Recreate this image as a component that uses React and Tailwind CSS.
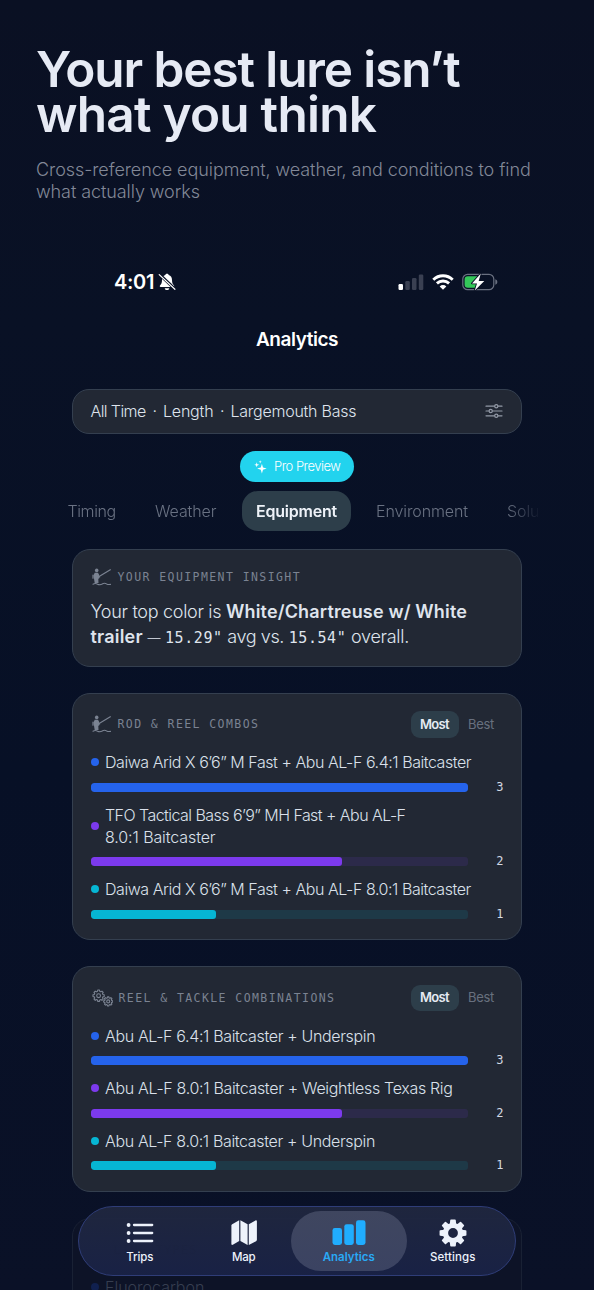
import clsx from 'clsx';

const rodCombos = [
  { label: ['Daiwa Arid X 6’6” M Fast + Abu AL-F 6.4:1 Baitcaster'], value: 3, tracking: 'tracking-[-0.45px]', color: 'blue' },
  { label: ['TFO Tactical Bass 6’9” MH Fast + Abu AL-F', '8.0:1 Baitcaster'], value: 2, tracking: 'tracking-[-0.55px]', color: 'violet' },
  { label: ['Daiwa Arid X 6’6” M Fast + Abu AL-F 8.0:1 Baitcaster'], value: 1, tracking: 'tracking-[-0.45px]', color: 'cyan' },
];

const reelCombos = [
  { label: ['Abu AL-F 6.4:1 Baitcaster + Underspin'], value: 3, tracking: 'tracking-[-0.35px]', color: 'blue' },
  { label: ['Abu AL-F 8.0:1 Baitcaster + Weightless Texas Rig'], value: 2, tracking: 'tracking-[-0.32px]', color: 'violet' },
  { label: ['Abu AL-F 8.0:1 Baitcaster + Underspin'], value: 1, tracking: 'tracking-[-0.35px]', color: 'cyan' },
];

const barColors = {
  blue: { fill: 'bg-[#2563eb]', track: 'bg-[#2563eb]/10' },
  violet: { fill: 'bg-[#7c3aed]', track: 'bg-[#7c3aed]/12' },
  cyan: { fill: 'bg-[#06b6d4]', track: 'bg-[#06b6d4]/12' },
};

function gearPath(cx, cy, outer, inner, teeth) {
  const points = [];
  const step = (Math.PI * 2) / teeth;
  for (let i = 0; i < teeth; i++) {
    const a = i * step - Math.PI / 2;
    [[-0.32, inner], [-0.2, outer], [0.2, outer], [0.32, inner]].forEach(([k, r]) => {
      points.push(`${(cx + r * Math.cos(a + k * step)).toFixed(2)} ${(cy + r * Math.sin(a + k * step)).toFixed(2)}`);
    });
  }
  return `M${points.join('L')}Z`;
}

function AnglerIcon() {
  return (
    <svg viewBox="0 0 20 18" className="h-[18px] w-[21px]" fill="none" stroke="currentColor" strokeLinecap="round" strokeLinejoin="round">
      <circle cx="5.2" cy="2.4" r="1.8" fill="currentColor" stroke="none" />
      <path d="M3.200 4.700h3.300l1.200 2.400v3.300l-.9.4.2 4.200H3.200l-.6-3.700-.6-3.700z" fill="currentColor" stroke="none" />
      <path d="M1.500 7.200v3M3.300 9h4.800" strokeWidth="1.200" />
      <path d="M7.600 8.400L18.800 1.700" strokeWidth="1.200" />
      <path d="M1.500 16.200c1.600-.9 3-.9 4.600 0 1.500.7 3.100.7 4.600-.2 1.500-1 3-1 4.400-.1 1.200.7 2.300.8 3.900.5" strokeWidth="1.100" />
    </svg>
  );
}

function GearsIcon() {
  return (
    <svg viewBox="0 0 22 18" className="h-[18px] w-[22px]" fill="none" stroke="currentColor" strokeWidth="1.1" strokeLinejoin="round">
      <path d={gearPath(7.6, 6.7, 5.7, 4.5, 8)} />
      <circle cx="7.6" cy="6.7" r="1.9" />
      <path d={gearPath(17.2, 12.4, 4.6, 3.6, 8)} />
      <circle cx="17.2" cy="12.4" r="1.5" />
    </svg>
  );
}

function SlidersIcon() {
  return (
    <svg viewBox="0 0 18 14" className="h-[14px] w-[18px] text-[#9299a6]" fill="none" stroke="currentColor" strokeWidth="1.2" strokeLinecap="round">
      <path d="M1 2.2h8.400M13.200 2.200H17M1 7h2.800M7.600 7H17M1 11.800h8.400M13.200 11.800H17" />
      <circle cx="11.3" cy="2.200" r="1.600" />
      <circle cx="5.700" cy="7" r="1.600" />
      <circle cx="11.3" cy="11.800" r="1.600" />
    </svg>
  );
}

function StatusBar() {
  return (
    <div className="mt-[66px] flex h-6 items-center justify-between pr-[96px] pl-[114px] text-white">
      <div className="flex items-center gap-[4px]">
        <span className="text-[20px] font-semibold tracking-[-0.3px]">4:01</span>
        <svg viewBox="0 0 18 18" className="h-[18px] w-[18px]">
          <path d="M9 .8c.9 0 1.500.5 1.700 1.300 2.200.7 3.300 2.500 3.300 5 0 3.300.8 4.300 2 5.500.5.6.2 1.500-.6 1.500H2.600c-.8 0-1.100-.9-.6-1.500 1.200-1.200 2-2.200 2-5.500 0-2.500 1.100-4.300 3.300-5C7.500 1.300 8.100.8 9 .8zM6.700 15.200h4.600c-.2 1.200-1.100 1.900-2.300 1.900s-2.100-.7-2.300-1.900z" fill="currentColor" />
          <path d="M1.200 1.200L17.300 16.300" stroke="#0a1125" strokeWidth="3" />
          <path d="M1.200 1.600L16.900 16.300" stroke="currentColor" strokeWidth="1.200" strokeLinecap="round" />
        </svg>
      </div>
      <div className="flex items-center gap-[8px]">
        <svg viewBox="0 0 26 16" className="h-4 w-[26px]">
          <rect x="0.5" y="10" width="4.500" height="6" rx="1.200" fill="#fff" />
          <rect x="7.300" y="7" width="4.500" height="9" rx="1.200" fill="#3a4052" />
          <rect x="14" y="4" width="4.500" height="12" rx="1.200" fill="#3a4052" />
          <rect x="20.800" y="0.500" width="4.500" height="15.500" rx="1.200" fill="#3a4052" />
        </svg>
        <svg viewBox="0 0 22 16" className="h-4 w-[22px]" fill="none" stroke="currentColor" strokeWidth="2.900">
          <path d="M1.300 5.700a14 14 0 0 1 19.400 0" />
          <path d="M4.900 9.400a8.900 8.900 0 0 1 12.200 0" />
          <path d="M11 15.800L7.700 12.400a4.700 4.700 0 0 1 6.600 0z" fill="currentColor" stroke="none" />
        </svg>
        <svg viewBox="0 0 36 18" className="h-[18px] w-9">
          <rect x="0.800" y="1.300" width="31" height="15.400" rx="4.800" fill="none" stroke="#6a7080" strokeWidth="1.200" />
          <path d="M33.300 6.300c1.300.4 2 1.400 2 2.700s-.7 2.300-2 2.700z" fill="#6a7080" />
          <path d="M5.800 3.200H15v11.600H5.800a3.200 3.200 0 0 1-3.200-3.200V6.400a3.200 3.200 0 0 1 3.200-3.200z" fill="#34c759" />
          <path d="M18.800.6L10 10.400h5l-2.200 7.100L22.300 7.900h-5.600z" fill="#fff" stroke="#0a1125" strokeWidth="1.800" paintOrder="stroke" strokeLinejoin="round" />
        </svg>
      </div>
    </div>
  );
}

function Card({ className, children }) {
  return (
    <section className={clsx('mx-[72px] rounded-[18px] border border-[#343f4f] bg-[#222834] px-[17.5px]', className)}>
      {children}
    </section>
  );
}

function CardTitle({ icon, children }) {
  return (
    <div className="flex items-center gap-[6px] text-[#7b8392]">
      {icon}
      <h2 className="font-['DejaVu_Sans_Mono',monospace] text-[11.5px] leading-4 tracking-[1.42px] whitespace-nowrap uppercase">{children}</h2>
    </div>
  );
}

function SortToggle() {
  return (
    <div className="flex items-center text-[13px]">
      <span className="flex h-[26.5px] w-12 items-center justify-center rounded-[9px] bg-[#2d3e4a] font-semibold tracking-[-0.6px] text-[#e6ebf3]">Most</span>
      <span className="w-[45px] pl-[9.5px] tracking-[-0.3px] text-[#68707f]">Best</span>
    </div>
  );
}

function BarRow({ label, value, tracking, color }) {
  const { fill, track } = barColors[color];
  return (
    <li>
      <div className="flex items-center gap-[6.5px]">
        <span className={clsx('size-2 shrink-0 rounded-full', fill)} />
        <p className={clsx('text-[16px] leading-[22px] font-light whitespace-nowrap text-[#dae0ea]', tracking)}>
          {label.map((line, i) => (
            <span key={line} className={clsx('block', i > 0 && 'tracking-[-0.1px]')}>{line}</span>
          ))}
        </p>
      </div>
      <div className="mt-[9.5px] flex h-[9px] items-center justify-between">
        <div className={clsx('h-[9px] w-[377px] overflow-hidden rounded-[3px]', track)}>
          <div className={clsx('h-full rounded-[3px]', fill)} style={{ width: `${(value / 3) * 100}%` }} />
        </div>
        <span className="font-['DejaVu_Sans_Mono',monospace] text-[12px] leading-[9px] text-[#d3d9e3]">{value}</span>
      </div>
    </li>
  );
}

function ComboCard({ icon, title, rows, className }) {
  return (
    <Card className={className}>
      <div className="flex h-[26.5px] items-center justify-between">
        <CardTitle icon={icon}>{title}</CardTitle>
        <SortToggle />
      </div>
      <ul className="mt-[13.5px] flex flex-col gap-3">
        {rows.map((row) => (
          <BarRow key={row.color} {...row} />
        ))}
      </ul>
    </Card>
  );
}

function NavItem({ icon, label, active, tracking, className }) {
  return (
    <div
      className={clsx(
        'flex h-[60.5px] w-[115.5px] flex-col items-center rounded-full pt-[8px]',
        active ? 'bg-gradient-to-b from-[#3f465f] to-[#3b4362] text-[#29a9f5]' : 'text-[#edf2fb]',
        className
      )}
    >
      <div className="flex h-[28px] items-center justify-center">{icon}</div>
      <span className={clsx('mt-[3px] text-[11.5px] leading-[14px]', active ? 'font-semibold' : 'font-medium', tracking)}>{label}</span>
    </div>
  );
}

function TabBar() {
  return (
    <nav className="absolute top-[1206px] left-[78px] flex h-[70px] w-[438px] items-center rounded-[35px] border border-[#2f3d78] bg-gradient-to-b from-[#20273f]/94 to-[#1a2348]/90 px-[3px]">
      <NavItem
        label="Trips"
        tracking="tracking-[-0.1px]"
        icon={
          <svg viewBox="0 0 28 22" className="h-[22px] w-7" fill="currentColor">
            <circle cx="2.600" cy="3" r="1.900" />
            <circle cx="2.600" cy="11" r="1.900" />
            <circle cx="2.600" cy="19" r="1.900" />
            <path d="M8 3h18.200M8 11h18.200M8 19h18.200" stroke="currentColor" strokeWidth="2.300" strokeLinecap="round" />
          </svg>
        }
      />
      <NavItem
        className="-ml-[11.500px]"
        label="Map"
        tracking="tracking-[-0.2px]"
        icon={
          <svg viewBox="0 0 28 27" className="h-[27px] w-7" fill="currentColor">
            <path d="M9.200 1.200v20.900l-6.400 3.700c-.7.4-1.400 0-1.400-.8V6.600c0-.6.3-1.100.8-1.400z" />
            <path d="M10.400 1.200l7.200 4v20.700l-7.200-3.800z" />
            <path d="M18.800 5.200l6.700-3.800c.7-.4 1.400 0 1.400.8v18.600c0 .6-.3 1.100-.8 1.400l-7.300 3.800z" />
          </svg>
        }
      />
      <NavItem
        active
        className="-ml-[10.500px]"
        label="Analytics"
        icon={
          <svg viewBox="0 0 34 25" className="h-[25px] w-[34px]" fill="#20adff">
            <rect x="0.500" y="8" width="9.500" height="17" rx="2.400" />
            <rect x="12.300" y="4.200" width="9.500" height="20.800" rx="2.400" />
            <rect x="24" y="0.300" width="9.500" height="24.700" rx="2.400" />
          </svg>
        }
      />
      <NavItem
        className="-ml-[11.500px]"
        label="Settings"
        tracking="tracking-[0.1px]"
        icon={
          <svg viewBox="0 0 28 28" className="size-7" fill="currentColor" stroke="currentColor" strokeWidth="1.600" strokeLinejoin="round">
            <path
              fillRule="evenodd"
              d={`${gearPath(14, 14, 12.8, 9.4, 8)}M14 8.300a5.700 5.700 0 1 0 0 11.400a5.700 5.700 0 1 0 0-11.400Z`}
            />
          </svg>
        }
      />
    </nav>
  );
}

export default function App() {
  return (
    <main className="relative h-[1290px] w-[594px] overflow-hidden bg-[linear-gradient(#0a1023,#091125_25%,#071026_60%,#0a1127)] font-[Inter,sans-serif]">
      <header className="pt-[46.5px] pl-[36px] whitespace-nowrap">
        <h1 className="text-[49.5px] leading-[45px] font-semibold text-[#e6eaf4]">
          <span className="block tracking-[-1.1px]">Your best lure isn’t</span>
          <span className="block tracking-[-0.75px]">what you think</span>
        </h1>
        <p className="mt-[22px] text-[18px] leading-[22.5px] font-light text-[#828897]">
          <span className="block tracking-[-0.07px]">Cross-reference equipment, weather, and conditions to find</span>
          <span className="block tracking-[-0.08px]">what actually works</span>
        </p>
      </header>

      <StatusBar />
      <h2 className="mt-[32px] text-center text-[19px] leading-7 font-semibold tracking-[-0.45px] text-white">Analytics</h2>

      <div className="mx-[72px] mt-[35px] flex h-[45px] items-center justify-between rounded-[17px] border border-[#343f4f] bg-[#222834] pr-[18.5px] pl-[17.5px] text-[16px] font-light text-[#dfe4ed]">
        <div className="flex items-center">
          <span className="w-[56px] tracking-[-0.6px] whitespace-nowrap">All Time</span>
          <span className="w-[16.5px] text-center">·</span>
          <span className="w-[51px] tracking-[-0.2px]">Length</span>
          <span className="w-[16.5px] text-center">·</span>
          <span className="tracking-[-0.25px]">Largemouth Bass</span>
        </div>
        <SlidersIcon />
      </div>

      <div className="mx-auto mt-[17.5px] flex h-[31px] w-[114px] items-center rounded-full bg-[#22d3ee] pl-[14px] text-white">
        <svg viewBox="0 0 14 14" className="size-[14px]" fill="currentColor">
          <path d="M7.900 3.800l1.100 3.700 3.700 1.100L9 9.700l-1.100 3.700L6.800 9.700 3.100 8.600l3.700-1.100z" />
          <path d="M2.700 2.300l.6 1.900 1.900.6-1.900.6-.6 1.900-.6-1.900-1.900-.6 1.900-.6z" />
          <path d="M6.200.2l.4 1.200 1.200.4-1.200.4-.4 1.200-.4-1.200-1.200-.4 1.200-.4z" />
        </svg>
        <span className="ml-[6px] text-[13px] font-light tracking-[-0.52px] whitespace-nowrap">Pro Preview</span>
      </div>

      <div className="mx-[53px] mt-[9px] flex h-[39.5px] items-center overflow-hidden mask-r-from-93% pl-[14.5px] text-[16px] font-light text-[#6a7283]">
        <span className="w-[87.5px] shrink-0 tracking-[-0.4px]">Timing</span>
        <span className="w-[87px] shrink-0 tracking-[-0.1px]">Weather</span>
        <span className="flex h-[39.5px] w-[109px] shrink-0 items-center justify-center rounded-[16px] bg-[#2d3e4a] font-semibold tracking-[-0.24px] text-[#eef2f8]">Equipment</span>
        <span className="ml-[25px] w-[131px] shrink-0 tracking-[-0.1px]">Environment</span>
        <span className="shrink-0 tracking-[-0.1px]">Solunar</span>
      </div>

      <Card className="mt-[18px] h-[118px] pt-[18px]">
        <div className="h-4">
          <CardTitle icon={<AnglerIcon />}>Your Equipment Insight</CardTitle>
        </div>
        <p className="mt-[15.5px] text-[18px] leading-[25px] font-light tracking-[-0.3px] whitespace-nowrap text-[#dfe4ed]">
          Your top color is <b className="font-semibold tracking-[0.16px]">White/Chartreuse w/ White</b>
          <br />
          <b className="font-semibold tracking-[0.2px]">trailer</b> <span className="text-[13px]">—</span>{' '}
          <span className="font-['DejaVu_Sans_Mono',monospace] text-[15px] leading-none tracking-[0.57px]">15.29"</span>
          <span className="tracking-[-0.4px]"> avg vs. </span>
          <span className="font-['DejaVu_Sans_Mono',monospace] text-[15px] leading-none tracking-[0.57px]">15.54"</span> overall.
        </p>
      </Card>

      <ComboCard className="mt-[26.5px] h-[247px] pt-[17px]" icon={<AnglerIcon />} title="Rod & Reel Combos" rows={rodCombos} />
      <ComboCard className="mt-[26px] h-[226px] pt-[17.5px]" icon={<GearsIcon />} title="Reel & Tackle Combinations" rows={reelCombos} />

      {/* dimmed card that runs on under the tab bar */}
      <section className="mx-[72px] mt-[26px] h-[120px] rounded-[18px] border border-[#192134] bg-[#0d1327] px-[17.5px] pt-[23px]">
        <h2 className="pl-[23px] font-['DejaVu_Sans_Mono',monospace] text-[12px] leading-4 tracking-[1.2px] text-[#050914]">LINE TYPES</h2>
        <div className="mt-[18px] flex items-center gap-[6.5px]">
          <span className="size-2 rounded-full bg-[#10204f]" />
          <span className="text-[16px] leading-[22px] font-light text-[#363e50]">Fluorocarbon</span>
        </div>
      </section>

      <TabBar />
    </main>
  );
}
